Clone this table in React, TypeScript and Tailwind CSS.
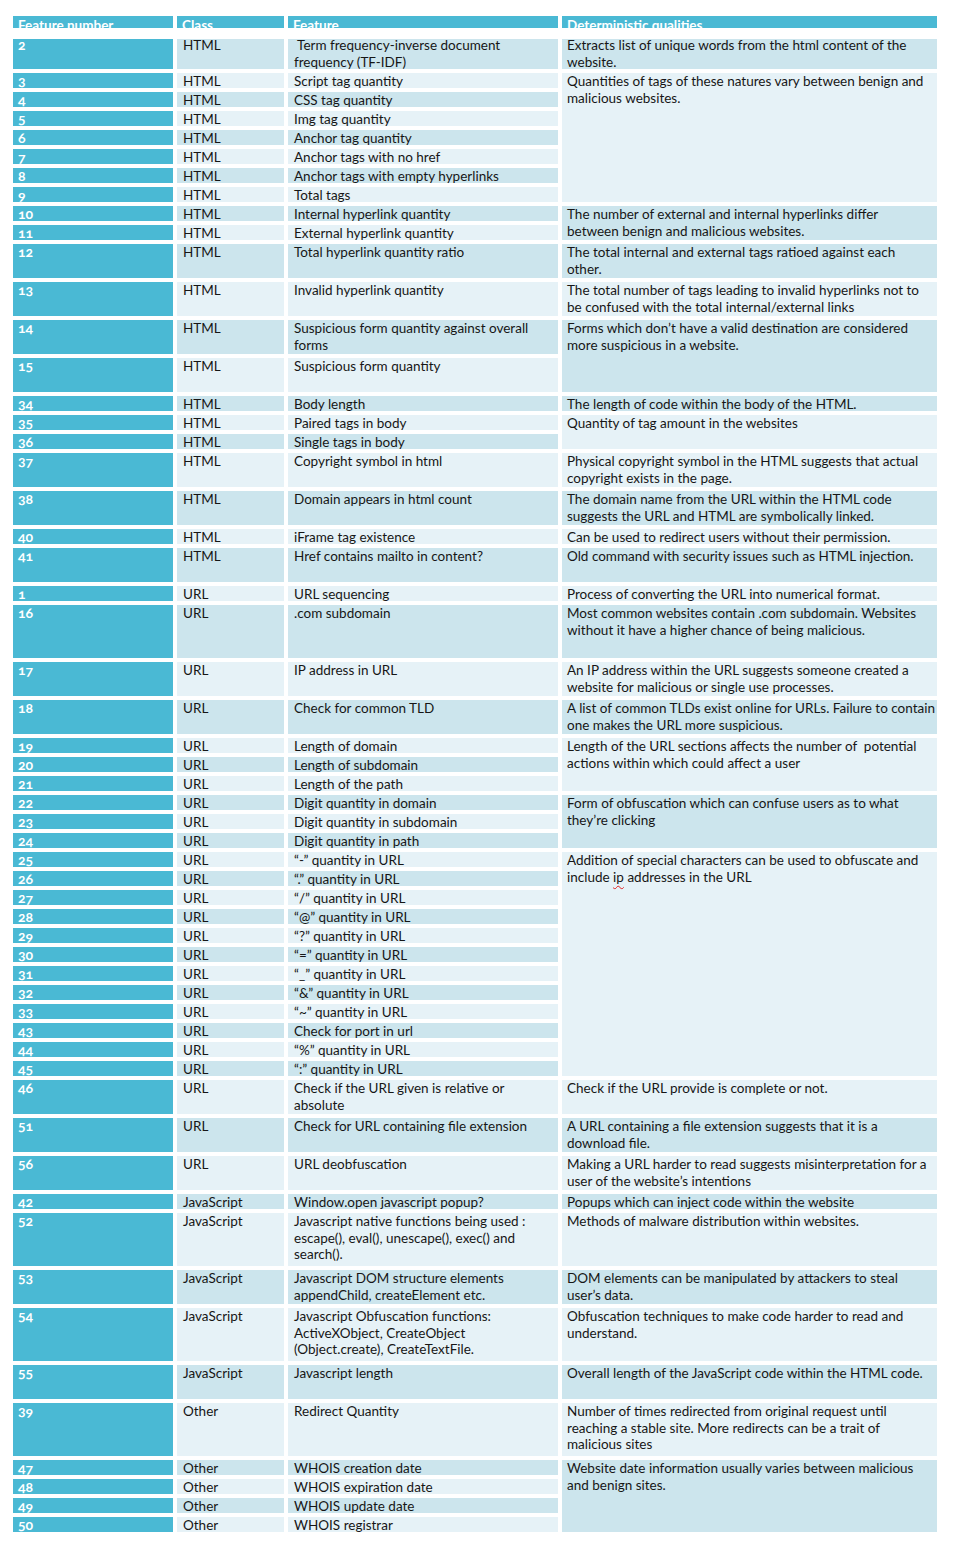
import React from "react";

type Row = {
  n: string;
  c: string;
  f: React.ReactNode[];
  u: number;
  d?: { t: React.ReactNode[]; s: number };
};

const rows: Row[] = [
  { n: "2", c: "HTML", f: ["\u00a0Term frequency-inverse document", "frequency (TF-IDF)"], u: 1, d: { t: ["Extracts list of unique words from the html content of the", "website."], s: 1 } },
  { n: "3", c: "HTML", f: ["Script tag quantity"], u: 1, d: { t: ["Quantities of tags of these natures vary between benign and", "malicious websites."], s: 7 } },
  { n: "4", c: "HTML", f: ["CSS tag quantity"], u: 1 },
  { n: "5", c: "HTML", f: ["Img tag quantity"], u: 1 },
  { n: "6", c: "HTML", f: ["Anchor tag quantity"], u: 1 },
  { n: "7", c: "HTML", f: ["Anchor tags with no href"], u: 1 },
  { n: "8", c: "HTML", f: ["Anchor tags with empty hyperlinks"], u: 1 },
  { n: "9", c: "HTML", f: ["Total tags"], u: 1 },
  { n: "10", c: "HTML", f: ["Internal hyperlink quantity"], u: 1, d: { t: ["The number of external and internal hyperlinks differ", "between benign and malicious websites."], s: 2 } },
  { n: "11", c: "HTML", f: ["External hyperlink quantity"], u: 1 },
  { n: "12", c: "HTML", f: ["Total hyperlink quantity ratio"], u: 2, d: { t: ["The total internal and external tags ratioed against each", "other."], s: 2 } },
  { n: "13", c: "HTML", f: ["Invalid hyperlink quantity"], u: 2, d: { t: ["The total number of tags leading to invalid hyperlinks not to", "be confused with the total internal/external links"], s: 2 } },
  { n: "14", c: "HTML", f: ["Suspicious form quantity against overall", "forms"], u: 2, d: { t: ["Forms which don\u2019t have a valid destination are considered", "more suspicious in a website."], s: 4 } },
  { n: "15", c: "HTML", f: ["Suspicious form quantity"], u: 2 },
  { n: "34", c: "HTML", f: ["Body length"], u: 1, d: { t: ["The length of code within the body of the HTML."], s: 1 } },
  { n: "35", c: "HTML", f: ["Paired tags in body"], u: 1, d: { t: ["Quantity of tag amount in the websites"], s: 2 } },
  { n: "36", c: "HTML", f: ["Single tags in body"], u: 1 },
  { n: "37", c: "HTML", f: ["Copyright symbol in html"], u: 2, d: { t: ["Physical copyright symbol in the HTML suggests that actual", "copyright exists in the page."], s: 2 } },
  { n: "38", c: "HTML", f: ["Domain appears in html count"], u: 2, d: { t: ["The domain name from the URL within the HTML code", "suggests the URL and HTML are symbolically linked."], s: 2 } },
  { n: "40", c: "HTML", f: ["iFrame tag existence"], u: 1, d: { t: ["Can be used to redirect users without their permission."], s: 1 } },
  { n: "41", c: "HTML", f: ["Href contains mailto in content?"], u: 2, d: { t: ["Old command with security issues such as HTML injection."], s: 2 } },
  { n: "1", c: "URL", f: ["URL sequencing"], u: 1, d: { t: ["Process of converting the URL into numerical format."], s: 1 } },
  { n: "16", c: "URL", f: [".com subdomain"], u: 3, d: { t: ["Most common websites contain .com subdomain. Websites", "without it have a higher chance of being malicious."], s: 3 } },
  { n: "17", c: "URL", f: ["IP address in URL"], u: 2, d: { t: ["An IP address within the URL suggests someone created a", "website for malicious or single use processes."], s: 2 } },
  { n: "18", c: "URL", f: ["Check for common TLD"], u: 2, d: { t: ["A list of common TLDs exist online for URLs. Failure to contain", "one makes the URL more suspicious."], s: 2 } },
  { n: "19", c: "URL", f: ["Length of domain"], u: 1, d: { t: ["Length of the URL sections affects the number of \u00a0potential", "actions within which could affect a user"], s: 3 } },
  { n: "20", c: "URL", f: ["Length of subdomain"], u: 1 },
  { n: "21", c: "URL", f: ["Length of the path"], u: 1 },
  { n: "22", c: "URL", f: ["Digit quantity in domain"], u: 1, d: { t: ["Form of obfuscation which can confuse users as to what", "they\u2019re clicking"], s: 3 } },
  { n: "23", c: "URL", f: ["Digit quantity in subdomain"], u: 1 },
  { n: "24", c: "URL", f: ["Digit quantity in path"], u: 1 },
  {
    n: "25",
    c: "URL",
    f: ["\u201c-\u201d quantity in URL"],
    u: 1,
    d: {
      t: [
        "Addition of special characters can be used to obfuscate and",
        <>
          include{" "}
          <span className="underline decoration-wavy decoration-[#e02020] decoration-1 underline-offset-[3px]">ip</span>{" "}
          addresses in the URL
        </>,
      ],
      s: 12,
    },
  },
  { n: "26", c: "URL", f: ["\u201c.\u201d quantity in URL"], u: 1 },
  { n: "27", c: "URL", f: ["\u201c/\u201d quantity in URL"], u: 1 },
  { n: "28", c: "URL", f: ["\u201c@\u201d quantity in URL"], u: 1 },
  { n: "29", c: "URL", f: ["\u201c?\u201d quantity in URL"], u: 1 },
  { n: "30", c: "URL", f: ["\u201c=\u201d quantity in URL"], u: 1 },
  { n: "31", c: "URL", f: ["\u201c_\u201d quantity in URL"], u: 1 },
  { n: "32", c: "URL", f: ["\u201c&\u201d quantity in URL"], u: 1 },
  { n: "33", c: "URL", f: ["\u201c~\u201d quantity in URL"], u: 1 },
  { n: "43", c: "URL", f: ["Check for port in url"], u: 1 },
  { n: "44", c: "URL", f: ["\u201c%\u201d quantity in URL"], u: 1 },
  { n: "45", c: "URL", f: ["\u201c:\u201d quantity in URL"], u: 1 },
  { n: "46", c: "URL", f: ["Check if the URL given is relative or", "absolute"], u: 2, d: { t: ["Check if the URL provide is complete or not."], s: 2 } },
  { n: "51", c: "URL", f: ["Check for URL containing file extension"], u: 2, d: { t: ["A URL containing a file extension suggests that it is a", "download file."], s: 2 } },
  { n: "56", c: "URL", f: ["URL deobfuscation"], u: 2, d: { t: ["Making a URL harder to read suggests misinterpretation for a", "user of the website\u2019s intentions"], s: 2 } },
  { n: "42", c: "JavaScript", f: ["Window.open javascript popup?"], u: 1, d: { t: ["Popups which can inject code within the website"], s: 1 } },
  { n: "52", c: "JavaScript", f: ["Javascript native functions being used :", "escape(), eval(), unescape(), exec() and", "search()."], u: 3, d: { t: ["Methods of malware distribution within websites."], s: 3 } },
  { n: "53", c: "JavaScript", f: ["Javascript DOM structure elements", "appendChild, createElement etc."], u: 2, d: { t: ["DOM elements can be manipulated by attackers to steal", "user\u2019s data."], s: 2 } },
  { n: "54", c: "JavaScript", f: ["Javascript Obfuscation functions:", "ActiveXObject, CreateObject", "(Object.create), CreateTextFile."], u: 3, d: { t: ["Obfuscation techniques to make code harder to read and", "understand."], s: 3 } },
  { n: "55", c: "JavaScript", f: ["Javascript length"], u: 2, d: { t: ["Overall length of the JavaScript code within the HTML code."], s: 2 } },
  { n: "39", c: "Other", f: ["Redirect Quantity"], u: 3, d: { t: ["Number of times redirected from original request until", "reaching a stable site. More redirects can be a trait of", "malicious sites"], s: 3 } },
  { n: "47", c: "Other", f: ["WHOIS creation date"], u: 1, d: { t: ["Website date information usually varies between malicious", "and benign sites."], s: 4 } },
  { n: "48", c: "Other", f: ["WHOIS expiration date"], u: 1 },
  { n: "49", c: "Other", f: ["WHOIS update date"], u: 1 },
  { n: "50", c: "Other", f: ["WHOIS registrar"], u: 1 },
];

const dark = "bg-[#cce5ed]";
const light = "bg-[#e6f2f7]";

function Lines({ lines }: { lines: React.ReactNode[] }) {
  return (
    <>
      {lines.map((l, i) => (
        <div key={i} className="whitespace-nowrap">
          {l}
        </div>
      ))}
    </>
  );
}

export default function App() {
  // grid line where each table row begins (row "2" is grid row 1)
  let start = 1;
  const placed = rows.map((r, i) => {
    const s = start;
    start += r.u;
    return { ...r, s, band: i % 2 === 0 ? dark : light, lift: i === 0 ? "-mt-[2px]" : "" };
  });

  return (
    <div className="min-h-[1548px] bg-white pl-[13px] pt-[16px] font-['Lato',sans-serif] text-[13.5px] leading-[16.5px] text-[#161616]">
      <div className="grid h-[12px] grid-cols-[160px_107px_270px_375px] gap-x-1 font-bold text-white">
        <div className="overflow-hidden bg-[#4ab9d4] px-[5px] pt-[1px]">Feature number</div>
        <div className="overflow-hidden bg-[#4ab9d4] px-[5px] pt-[1px]">Class</div>
        <div className="overflow-hidden bg-[#4ab9d4] px-[5px] pt-[1px]">Feature</div>
        <div className="overflow-hidden bg-[#4ab9d4] px-[5px] pt-[1px]">Deterministic qualities</div>
      </div>

      <div className="mt-[11px] grid grid-cols-[160px_107px_270px_375px] grid-rows-[30px_repeat(77,15px)] gap-x-1 gap-y-1">
        {placed.map((r) => (
          <React.Fragment key={r.n}>
            <div
              className="col-start-1 overflow-hidden bg-[#4ab9d4] px-[5px] text-[14px] font-bold text-white oldstyle-nums"
              style={{ gridRow: `${r.s} / span ${r.u}` }}
            >
              <div className={r.lift}>{r.n}</div>
            </div>
            <div className={`col-start-2 px-[6px] ${r.band}`} style={{ gridRow: `${r.s} / span ${r.u}` }}>
              <div className={r.lift}>{r.c}</div>
            </div>
            <div className={`col-start-3 px-[6px] ${r.band}`} style={{ gridRow: `${r.s} / span ${r.u}` }}>
              <div className={r.lift}>
                <Lines lines={r.f} />
              </div>
            </div>
            {r.d && (
              <div className={`col-start-4 px-[5px] ${r.band}`} style={{ gridRow: `${r.s} / span ${r.d.s}` }}>
                <div className={r.lift}>
                  <Lines lines={r.d.t} />
                </div>
              </div>
            )}
          </React.Fragment>
        ))}
      </div>
    </div>
  );
}
